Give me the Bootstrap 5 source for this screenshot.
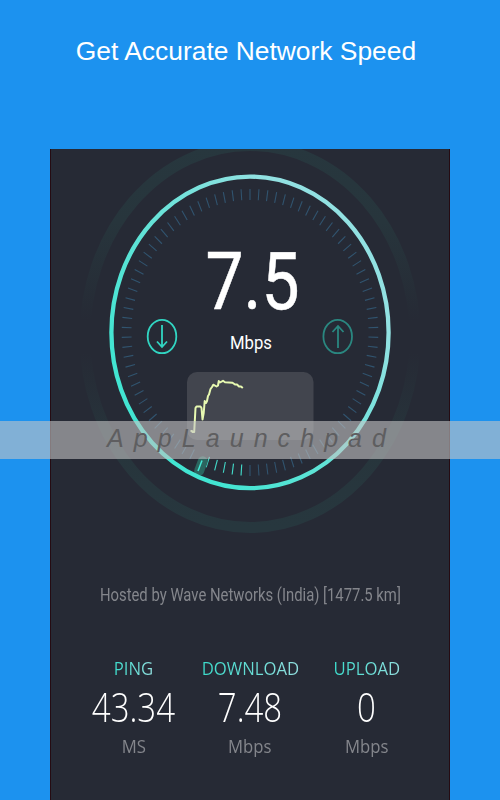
<!DOCTYPE html>
<html lang="en">
<head>
<meta charset="utf-8">
<meta name="viewport" content="width=device-width, initial-scale=1">
<title>Network Speed</title>
<link href="https://cdn.jsdelivr.net/npm/bootstrap@5.3.0/dist/css/bootstrap.min.css" rel="stylesheet">
<style>
body{background:#1c92ef;font-family:Roboto,sans-serif;height:800px}
.headline{height:149px;padding-top:32px;font:26.4px/39px "Liberation Sans",Arial,sans-serif;white-space:nowrap}
.phone{width:400px;height:651px;background:#262a35;border-left:1px solid #250b12;border-right:1px solid #250b12}
.dial{height:400px;margin:0 -1px}
.host{height:36px;line-height:36px;margin-top:28px;font-size:18px;color:#84868c;white-space:nowrap}
.squeeze{display:inline-block;white-space:nowrap}
.stats{margin-top:41px;padding:0 24px 0 24px;font-family:"Open Sans","Noto Sans",sans-serif}
.stat-name{height:28px;line-height:28px;font-size:19px}
.stat-name span{background:linear-gradient(90deg,#3bdccb,#92dfdf);-webkit-background-clip:text;background-clip:text;color:transparent}
.stat-value{height:50px;line-height:50px;font-size:40px;font-weight:300;color:#fff}
.stat-unit{height:28px;line-height:28px;font-size:19px;color:#84868c}
.sx{transform:scaleX(.88)}
.stat-value .sx{transform:scaleX(.825)}
.watermark{top:421px;left:0;right:0;height:38px;background:rgba(197,197,197,.6)}
.watermark svg{display:block}
</style>
</head>
<body class="m-0 position-relative overflow-hidden">
<h1 class="headline text-white text-center m-0 pe-2">Get Accurate Network Speed</h1>
<main class="phone mx-auto overflow-hidden">
<svg class="dial d-block" width="400" height="400" viewBox="50 149 400 400">
<defs>
<linearGradient id="ring" gradientUnits="userSpaceOnUse" x1="150" y1="400" x2="330" y2="260"><stop offset="0" stop-color="#42e5d2"/><stop offset=".4" stop-color="#5ee3d6"/><stop offset="1" stop-color="#92e1e2"/></linearGradient>
<linearGradient id="haloFade" x1="0" y1="0" x2="0" y2="1"><stop offset="0" stop-color="#27373e"/><stop offset=".2" stop-color="#27353c"/><stop offset=".46" stop-color="#262a35"/><stop offset=".54" stop-color="#262a35"/><stop offset=".8" stop-color="#27353c"/><stop offset="1" stop-color="#27373e"/></linearGradient>
</defs>
<ellipse cx="250" cy="336.5" rx="165" ry="191" fill="none" stroke="url(#haloFade)" stroke-width="11"/>
<g id="ticks" stroke-width="1.1"></g>
<rect x="196" y="456" width="10" height="20" rx="5" fill="#2b655f" transform="rotate(21 201 466)"/>
<path d="M198 471L202 460.5" stroke="#43e8d5" stroke-width="1.5"/>
<ellipse cx="250" cy="332.4" rx="138.6" ry="155.8" fill="none" stroke="url(#ring)" stroke-width="4.3"/>
<g font-family="Roboto" fill="#fff" stroke="#fff">
<text x="205.5" y="309" font-size="79" stroke-width=".5" textLength="94" lengthAdjust="spacingAndGlyphs">7.5</text>
<text x="230" y="348.5" font-size="19" stroke-width="0" textLength="42" lengthAdjust="spacingAndGlyphs">Mbps</text>
</g>
<g fill="none" stroke-width="1.8">
<g stroke="#31d5c2"><ellipse cx="162" cy="336.5" rx="14.3" ry="16.7"/><path d="M162 325V347M157 341.5L162 347L167 341.5"/></g>
<g stroke="#2a8780"><ellipse cx="337.7" cy="336.5" rx="14.3" ry="16.7"/><path d="M338 348V326M332.5 332L338 326L343.5 332"/></g>
</g>
<rect x="187" y="372" width="126.5" height="68" rx="10" fill="#42454e"/>
<path d="M190.5 431H192L192.5 432L194.2 432L195.5 408L196.5 406.5H200.5L201.5 408L202.5 419.5L203.7 413L204.7 401L206 403L207 401L208 396L209 394.5L210.5 389L212 387L213.3 384.7L216.5 386.5L218 385.5L218.8 381L220 382.5L223 380.8L225 382.2L232.5 382.7L235 384.5H237L239 386.5L241 386.5L242.8 388" fill="none" stroke="#e7f9b1" stroke-width="2" stroke-linejoin="round"/>
</svg>
<div class="host text-center"><span class="squeeze" style="transform:scaleX(.825)">Hosted by Wave Networks (India) [1477.5 km]</span></div>
<div class="stats row g-0 text-center">
<div class="col-4"><div class="stat-name"><span class="squeeze sx">PING</span></div><div class="stat-value"><span class="squeeze sx">43.34</span></div><div class="stat-unit"><span class="squeeze sx">MS</span></div></div>
<div class="col-4"><div class="stat-name"><span class="squeeze sx">DOWNLOAD</span></div><div class="stat-value"><span class="squeeze sx">7.48</span></div><div class="stat-unit"><span class="squeeze sx">Mbps</span></div></div>
<div class="col-4"><div class="stat-name"><span class="squeeze sx">UPLOAD</span></div><div class="stat-value"><span class="squeeze sx">0</span></div><div class="stat-unit"><span class="squeeze sx">Mbps</span></div></div>
</div>
</main>
<div class="watermark position-absolute">
<svg width="500" height="38"><text x="107" y="25.5" font-family="Liberation Sans" font-size="25" font-style="italic" fill="#5e5e60" textLength="279">AppLaunchpad</text></svg>
</div>
<script>
// 90 ticks, one every 4 degrees, on an ellipse; the first few after the bottom are lit
const g=document.getElementById('ticks');
for(let i=0;i<90;i++){
  if(i===51)continue;
  const a=i*4*Math.PI/180,s=Math.sin(a),c=Math.cos(a);
  const l=document.createElementNS('http://www.w3.org/2000/svg','line');
  l.setAttribute('x1',250+128.3*s);l.setAttribute('y1',332.4-143.5*c);
  l.setAttribute('x2',250+118.5*s);l.setAttribute('y2',332.4-132.5*c);
  l.setAttribute('stroke',i>45&&i<51?'#43dccb':'#31546f');
  g.appendChild(l);
}
</script>
<script src="https://cdn.jsdelivr.net/npm/bootstrap@5.3.0/dist/js/bootstrap.bundle.min.js"></script>
</body>
</html>
